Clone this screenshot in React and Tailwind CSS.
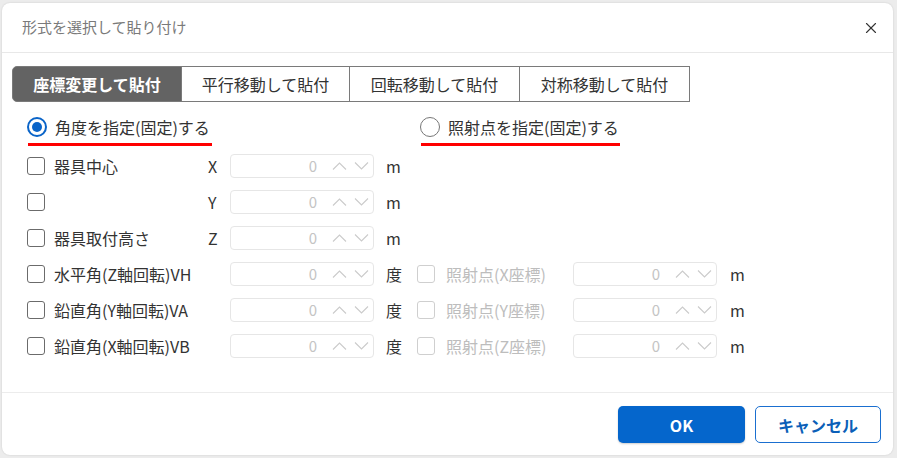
import { X } from 'lucide-react';

const font = { fontFamily: '"Noto Sans CJK JP", "Noto Sans", sans-serif' };

function Chevron({ up }) {
  return (
    <svg width="15" height="8" viewBox="0 0 15 8" fill="none" stroke="#cbcbcb" strokeWidth="1.1">
      {up ? <polyline points="1,7.5 7.5,1 14,7.5" /> : <polyline points="1,0.5 7.5,7 14,0.5" />}
    </svg>
  );
}

function NumberInput() {
  return (
    <div className="w-[144px] h-[24px] border border-[#e6e6e6] rounded-[4px] flex items-center justify-end pr-[4px] gap-[7px]">
      <span className="text-[15px] text-[#c4c4c4] mr-[8px]">0</span>
      <Chevron up />
      <Chevron />
    </div>
  );
}

function Checkbox({ disabled }) {
  return (
    <div
      className={
        'w-[18px] h-[18px] rounded-[3px] border-[1.5px] shrink-0 ' +
        (disabled ? 'border-[#cfcfcf]' : 'border-[#6b6b6b]')
      }
    />
  );
}

function Radio({ checked, label, width }) {
  return (
    <div className="inline-flex flex-col">
      <div className="flex items-center h-[24px]">
        {checked ? (
          <div className="w-[20px] h-[20px] rounded-full border-2 border-[#0a64c8] flex items-center justify-center">
            <div className="w-[10px] h-[10px] rounded-full bg-[#0a64c8]" />
          </div>
        ) : (
          <div className="w-[20px] h-[20px] rounded-full border-[1.5px] border-[#777]" />
        )}
        <span className="ml-[8px] text-[16px] text-[#333]">{label}</span>
      </div>
      <div className="h-[3px] bg-[#f00] mt-[4px] ml-[1px]" style={{ width }} />
    </div>
  );
}

const tabs = ['座標変更して貼付', '平行移動して貼付', '回転移動して貼付', '対称移動して貼付'];

const rows = [
  { label: '器具中心', axis: 'X', unit: 'm' },
  { label: '', axis: 'Y', unit: 'm' },
  { label: '器具取付高さ', axis: 'Z', unit: 'm' },
  { label: '水平角(Z軸回転)VH', axis: '', unit: '度', extra: '照射点(X座標)' },
  { label: '鉛直角(Y軸回転)VA', axis: '', unit: '度', extra: '照射点(Y座標)' },
  { label: '鉛直角(X軸回転)VB', axis: '', unit: '度', extra: '照射点(Z座標)' },
];

export default function App() {
  return (
    <div className="w-full h-[458px] bg-[#ececec] pt-[3px] pl-[2px] pr-[4px] pb-[3px]" style={font}>
      <div className="h-full bg-white rounded-[8px] flex flex-col shadow-[0_0_2px_rgba(0,0,0,0.15)]">
        <div className="h-[50px] shrink-0 flex items-center justify-between pl-[20px] pr-[13px] border-b border-[#e8e8e8]">
          <span className="text-[15px] text-[#7a7a7a]">形式を選択して貼り付け</span>
          <X className="w-[18px] h-[18px] text-[#333]" strokeWidth={1.5} />
        </div>

        <div className="flex-1 pl-[10px] pt-[13px]">
          <div className="flex">
            {tabs.map((t, i) => (
              <div
                key={t}
                className={
                  'h-[36px] flex items-center justify-center text-[16px] border border-[#7a7a7a] ' +
                  (i === 0 ? 'w-[170px] rounded-l-[5px] bg-[#636363] text-white font-bold' : '-ml-px text-[#333] ') +
                  (i === 1 ? 'w-[169px]' : '') +
                  (i > 1 ? 'w-[171px]' : '')
                }
              >
                {t}
              </div>
            ))}
          </div>

          <div className="flex pl-[15px] mt-[13px]">
            <Radio checked label="角度を指定(固定)する" width="184px" />
            <div className="ml-[208px]">
              <Radio label="照射点を指定(固定)する" width="199px" />
            </div>
          </div>

          <div className="pl-[15px] mt-[2px]">
            {rows.map((r, i) => (
              <div key={i} className="h-[36px] flex items-center text-[16px] text-[#333]">
                <Checkbox />
                <span className="ml-[9px] w-[154px] whitespace-nowrap">{r.label}</span>
                <span className="w-[22px]">{r.axis}</span>
                <NumberInput />
                <span className="ml-[12px] w-[31px]">{r.unit}</span>
                {r.extra && (
                  <>
                    <Checkbox disabled />
                    <span className="ml-[11px] w-[127px] text-[#bdbdbd] whitespace-nowrap">{r.extra}</span>
                    <NumberInput />
                    <span className="ml-[13px]">m</span>
                  </>
                )}
              </div>
            ))}
          </div>
        </div>

        <div className="h-[63px] shrink-0 border-t border-[#ececec] flex items-center justify-end gap-[10px] pr-[12px] pt-[1px]">
          <button className="w-[127px] h-[37px] rounded-[5px] bg-[#0566cc] text-white font-bold text-[16px] shadow-[0_1px_2px_rgba(0,0,0,0.2)]">
            OK
          </button>
          <button className="w-[126px] h-[37px] rounded-[5px] bg-white border border-[#1a6fd0] text-[#0b5fb8] font-bold text-[16px]">
            キャンセル
          </button>
        </div>
      </div>
    </div>
  );
}
